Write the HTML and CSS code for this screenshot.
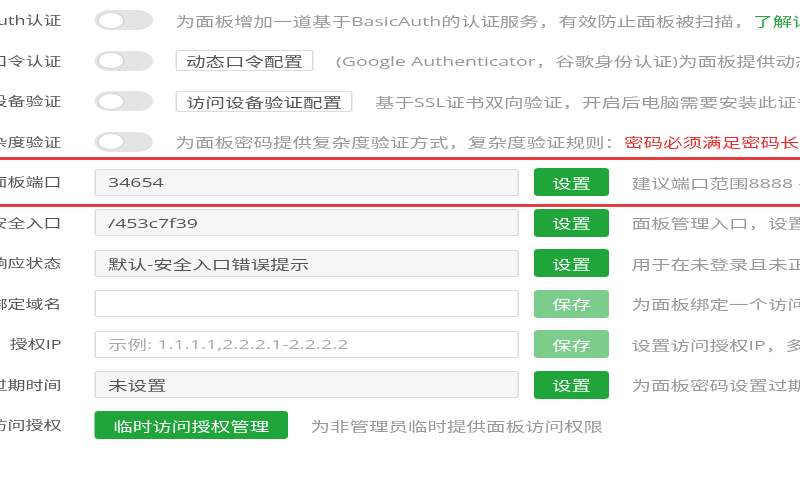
FILE: index.html
```html
<!DOCTYPE html>
<html lang="zh-CN">
<head>
<meta charset="utf-8">
<title>面板设置</title>
<link rel="stylesheet" href="styles.css">
</head>
<body>
<div class="form">
  <div class="row">
    <div class="label"><span>BasicAuth认证</span></div>
    <span class="switch"><span class="knob"></span></span>
    <div class="desc">为面板增加一道基于BasicAuth的认证服务，有效防止面板被扫描，<a class="link">了解详情</a></div>
  </div>
  <div class="row">
    <div class="label"><span>动态口令认证</span></div>
    <span class="switch"><span class="knob"></span></span>
    <span class="btn-outline">动态口令配置</span>
    <div class="desc">(Google Authenticator，谷歌身份认证)为面板提供动态口令认证</div>
  </div>
  <div class="row">
    <div class="label"><span>访问设备验证</span></div>
    <span class="switch"><span class="knob"></span></span>
    <span class="btn-outline">访问设备验证配置</span>
    <div class="desc">基于SSL证书双向验证，开启后电脑需要安装此证书才能访问面板</div>
  </div>
  <div class="row">
    <div class="label"><span>密码复杂度验证</span></div>
    <span class="switch"><span class="knob"></span></span>
    <div class="desc">为面板密码提供复杂度验证方式，复杂度验证规则：<span class="warn">密码必须满足密码长度大于8位</span></div>
  </div>
  <div class="row marked">
    <div class="label"><span>面板端口</span></div>
    <input class="field readonly" value="34654" readonly>
    <span class="btn">设置</span>
    <div class="desc">建议端口范围8888 - 65535</div>
    <div class="mark"></div>
  </div>
  <div class="row">
    <div class="label"><span>安全入口</span></div>
    <input class="field readonly" value="/453c7f39" readonly>
    <span class="btn">设置</span>
    <div class="desc">面板管理入口，设置后只能通过指定安全入口登录面板</div>
  </div>
  <div class="row">
    <div class="label"><span>未认证响应状态</span></div>
    <input class="field readonly" value="默认-安全入口错误提示" readonly>
    <span class="btn">设置</span>
    <div class="desc">用于在未登录且未正确输入安全入口时的响应提示</div>
  </div>
  <div class="row">
    <div class="label"><span>绑定域名</span></div>
    <input class="field" value="">
    <span class="btn disabled">保存</span>
    <div class="desc">为面板绑定一个访问用的域名</div>
  </div>
  <div class="row">
    <div class="label"><span>授权IP</span></div>
    <input class="field" placeholder="示例: 1.1.1.1,2.2.2.1-2.2.2.2">
    <span class="btn disabled">保存</span>
    <div class="desc">设置访问授权IP，多个请使用逗号分隔</div>
  </div>
  <div class="row">
    <div class="label"><span>密码过期时间</span></div>
    <input class="field readonly" value="未设置" readonly>
    <span class="btn">设置</span>
    <div class="desc">为面板密码设置过期时间</div>
  </div>
  <div class="row">
    <div class="label"><span>临时访问授权</span></div>
    <span class="btn wide">临时访问授权管理</span>
    <div class="desc">为非管理员临时提供面板访问权限</div>
  </div>
</div>
</body>
</html>
```
FILE: styles.css
```css
html, body {
  margin: 0;
  padding: 0;
  width: 800px;
  height: 500px;
  overflow: hidden;
  background: #fff;
}

.form {
  width: 560px;
  transform: scale(1.5, 1);
  transform-origin: 0 0;
  font-family: "Open Sans", "Noto Sans CJK SC", sans-serif;
}

.row {
  position: relative;
  display: flex;
  align-items: center;
  height: 40.5px;
  white-space: nowrap;
}

.label {
  flex: none;
  width: 41px;
  margin-right: 22px;
  display: flex;
  justify-content: flex-end;
  font-size: 12px;
  color: #555;
}

.switch {
  flex: none;
  box-sizing: border-box;
  width: 39px;
  height: 20px;
  padding: 1px 2px;
  border-radius: 10px;
  background: #e4e4e4;
  display: flex;
  align-items: center;
}

.knob {
  box-sizing: border-box;
  width: 18px;
  height: 17px;
  border-radius: 50%;
  background: #fff;
  border: 1px solid #d6d6d6;
}

.desc {
  margin-left: 15px;
  font-size: 13px;
  color: #999;
}

.link {
  color: #20a53a;
}

.warn {
  color: #ef2b2b;
}

.btn-outline {
  flex: none;
  margin-left: 15px;
  box-sizing: border-box;
  height: 21px;
  padding: 0 6px;
  border: 1px solid #dcdcdc;
  border-radius: 2px;
  background: #fff;
  color: #555;
  font-size: 13px;
  display: flex;
  align-items: center;
}

.field {
  flex: none;
  box-sizing: border-box;
  width: 283px;
  height: 27px;
  margin: 0;
  padding: 0 8px;
  border: 1px solid #dcdcdc;
  border-radius: 2px;
  background: #fff;
  color: #555;
  font: inherit;
  font-size: 13px;
  outline: none;
}

.field.readonly {
  background: #f6f6f6;
}

.field::placeholder {
  color: #aaa;
}

.btn {
  flex: none;
  box-sizing: border-box;
  width: 50px;
  height: 28px;
  margin-left: 10px;
  border-radius: 3px;
  background: #20a53a;
  color: #fff;
  font-size: 13px;
  display: flex;
  align-items: center;
  justify-content: center;
}

.btn.disabled {
  background: #7ccc8c;
}

.btn.wide {
  width: 129px;
  margin-left: 0;
}

.mark {
  position: absolute;
  left: -20px;
  right: -200px;
  top: -5px;
  bottom: -4px;
  border-top: 3px solid #e63b3f;
  border-bottom: 3px solid #e63b3f;
  pointer-events: none;
}
```
